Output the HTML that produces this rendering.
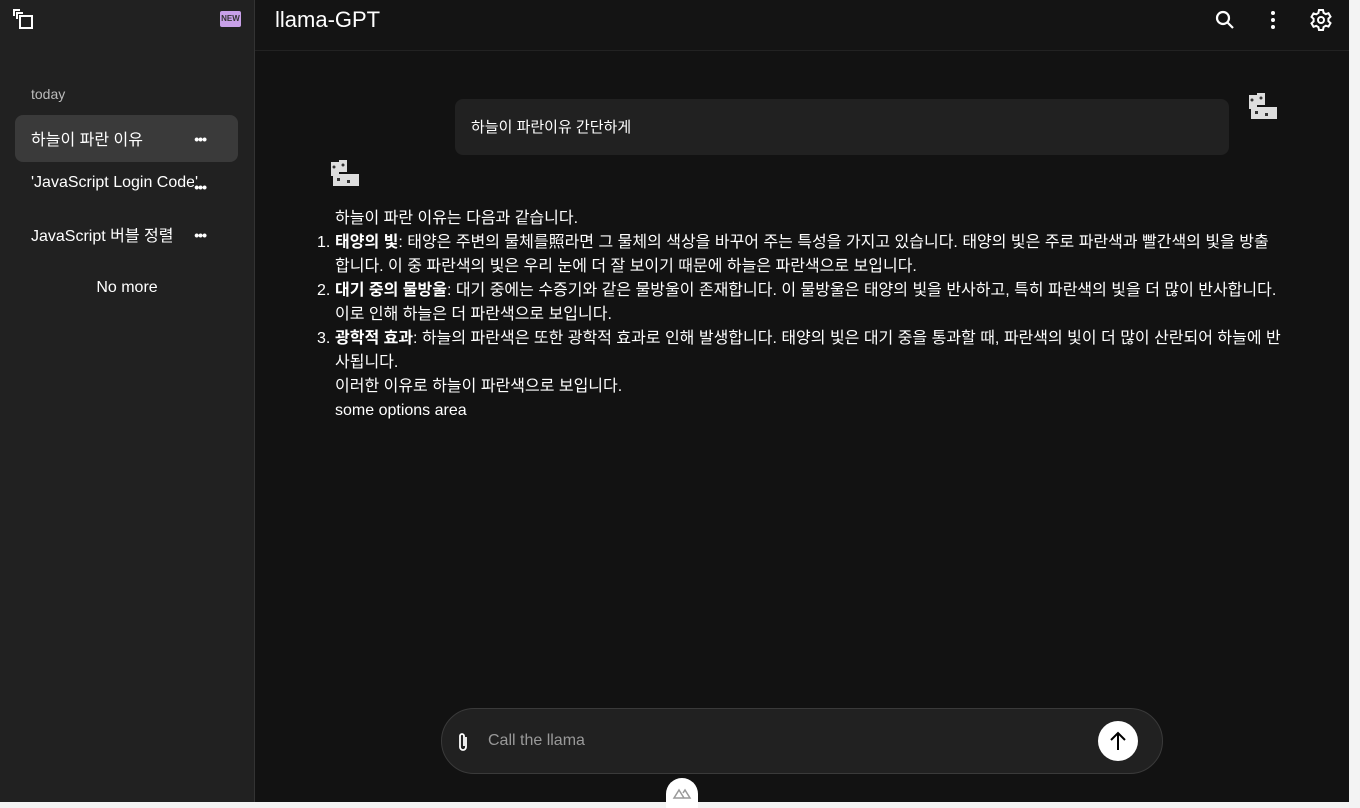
<!DOCTYPE html>
<html><head><meta charset="utf-8"><style>
*{box-sizing:border-box;margin:0;padding:0}
body{width:1360px;height:806px;background:#f3f3f3;font-family:"Liberation Sans","Noto Sans CJK KR",sans-serif;color:#fff;position:relative;overflow:hidden}
#side{position:absolute;left:0;top:0;width:255px;height:802px;background:#212121;border-right:1px solid #333}
#main{position:absolute;left:255px;top:0;width:1094px;height:802px;background:#121212}
#hdr{position:absolute;left:0;top:0;width:1094px;height:51px;border-bottom:1px solid #222;background:#141414}
.title{position:absolute;left:20px;top:7px;font-size:22px}
.item{position:absolute;left:15px;width:223px;height:47px;border-radius:8px;font-size:16px;padding:11px 16px;white-space:nowrap}
.dots{position:absolute;right:32px;top:17px;font-size:14px;font-weight:bold;letter-spacing:-1px;line-height:14px}
.msg{position:absolute;left:200px;width:774px;height:56px;top:99px;background:#212121;border-radius:8px;font-size:15px;padding:17px 16px}
.ans{position:absolute;left:80px;top:207px;font-size:16px;line-height:24px;width:960px}
.ans .l{padding-left:0;position:relative}
.ans .n{position:absolute;left:-18px}
.inp{position:absolute;left:186px;top:708px;width:722px;height:66px;border-radius:33px;background:#212121;border:1px solid #3a3a3a}
.llama{position:absolute;width:34px;height:34px}
</style></head><body>
<div id="side">
<svg style="position:absolute;left:12px;top:8px" width="22" height="22" viewBox="0 0 22 22" fill="none" stroke="#fff" stroke-width="2"><path d="M2 8V2h6M5 11V5h6"/><rect x="8" y="8" width="12" height="12"/></svg>
<div style="position:absolute;left:220px;top:11px;width:21px;height:16px;background:#c8a0e8;border-radius:2px;color:#333;font-size:8px;text-align:center;line-height:16px;font-weight:bold">NEW</div>
<div style="position:absolute;left:31px;top:86px;font-size:14px;color:#bbb">today</div>
<div class="item" style="top:115px;background:#3a3a3a">하늘이 파란 이유<span class="dots">•••</span></div>
<div class="item" style="top:163px">'JavaScript Login Code'<span class="dots" style="right:32px;background:#212121">•••</span></div>
<div class="item" style="top:211px">JavaScript 버블 정렬<span class="dots">•••</span></div>
<div style="position:absolute;left:0;width:254px;top:279px;text-align:center;font-size:16px">No more</div>
</div>
<div id="main">
<div id="hdr"><div class="title">llama-GPT</div>
<svg style="position:absolute;left:958px;top:8px" width="24" height="24" viewBox="0 0 24 24" fill="none" stroke="#fff" stroke-width="2.2"><circle cx="10" cy="10" r="6"/><path d="M14.5 14.5l5.5 5.5"/></svg>
<svg style="position:absolute;left:1006px;top:8px" width="24" height="24" viewBox="0 0 24 24" fill="#fff"><circle cx="12" cy="5" r="2"/><circle cx="12" cy="12" r="2"/><circle cx="12" cy="19" r="2"/></svg>
<svg style="position:absolute;left:1054px;top:8px" width="24" height="24" viewBox="0 0 24 24" fill="none" stroke="#fff" stroke-width="2"><circle cx="12" cy="12" r="3"/><path d="M10 2h4l.6 2.8 2.2 1.3 2.7-.9 2 3.5-2.1 1.9v2.6l2.1 1.9-2 3.5-2.7-.9-2.2 1.3L14 22h-4l-.6-2.8-2.2-1.3-2.7.9-2-3.5 2.1-1.9v-2.6L2.5 8.9l2-3.5 2.7.9 2.2-1.3z"/></svg>
</div>
<div class="msg">하늘이 파란이유 간단하게</div>
<svg class="llama" style="left:990px;top:89px" viewBox="0 0 34 34"><g fill="#ddd"><rect x="4" y="6" width="8" height="14"/><rect x="12" y="4" width="8" height="12"/><rect x="6" y="18" width="26" height="12"/></g><g fill="#333"><circle cx="7" cy="11" r="1.5"/><circle cx="16" cy="9" r="1.5"/><rect x="10" y="22" width="3" height="3"/><rect x="20" y="24" width="3" height="3"/></g></svg>
<svg class="llama" style="left:72px;top:156px" viewBox="0 0 34 34"><g fill="#ddd"><rect x="4" y="6" width="8" height="14"/><rect x="12" y="4" width="8" height="12"/><rect x="6" y="18" width="26" height="12"/></g><g fill="#333"><circle cx="7" cy="11" r="1.5"/><circle cx="16" cy="9" r="1.5"/><rect x="10" y="22" width="3" height="3"/><rect x="20" y="24" width="3" height="3"/></g></svg>
<div class="ans">
<div>하늘이 파란 이유는 다음과 같습니다.</div>
<div class="l"><span class="n">1.</span><b>태양의 빛</b>: 태양은 주변의 물체를照라면 그 물체의 색상을 바꾸어 주는 특성을 가지고 있습니다. 태양의 빛은 주로 파란색과 빨간색의 빛을 방출<br>합니다. 이 중 파란색의 빛은 우리 눈에 더 잘 보이기 때문에 하늘은 파란색으로 보입니다.</div>
<div class="l"><span class="n">2.</span><b>대기 중의 물방울</b>: 대기 중에는 수증기와 같은 물방울이 존재합니다. 이 물방울은 태양의 빛을 반사하고, 특히 파란색의 빛을 더 많이 반사합니다.<br>이로 인해 하늘은 더 파란색으로 보입니다.</div>
<div class="l"><span class="n">3.</span><b>광학적 효과</b>: 하늘의 파란색은 또한 광학적 효과로 인해 발생합니다. 태양의 빛은 대기 중을 통과할 때, 파란색의 빛이 더 많이 산란되어 하늘에 반<br>사됩니다.</div>
<div>이러한 이유로 하늘이 파란색으로 보입니다.</div>
<div>some options area</div>
</div>
<div class="inp">
<svg style="position:absolute;left:14px;top:22px" width="14" height="22" viewBox="0 0 14 22" fill="none" stroke="#fff" stroke-width="1.8"><path d="M10 6v10a3 3 0 0 1-6 0V5a2 2 0 0 1 4 0v10"/></svg>
<div style="position:absolute;left:46px;top:23px;font-size:16px;color:#999">Call the llama</div>
<div style="position:absolute;left:656px;top:12px;width:40px;height:40px;border-radius:50%;background:#fff"><svg width="40" height="40" viewBox="0 0 40 40" fill="none" stroke="#000" stroke-width="2"><path d="M20 29V12M13 19l7-7 7 7"/></svg></div>
</div>
<div style="position:absolute;left:411px;top:778px;width:32px;height:30px;border-radius:16px 16px 0 0;background:#fff"><svg width="32" height="24" viewBox="0 0 32 24" fill="none" stroke="#999" stroke-width="1.5"><path d="M8 20l5-8 5 8zM14 20h10l-5-8-2 3"/></svg></div>
</div>
</body></html>
